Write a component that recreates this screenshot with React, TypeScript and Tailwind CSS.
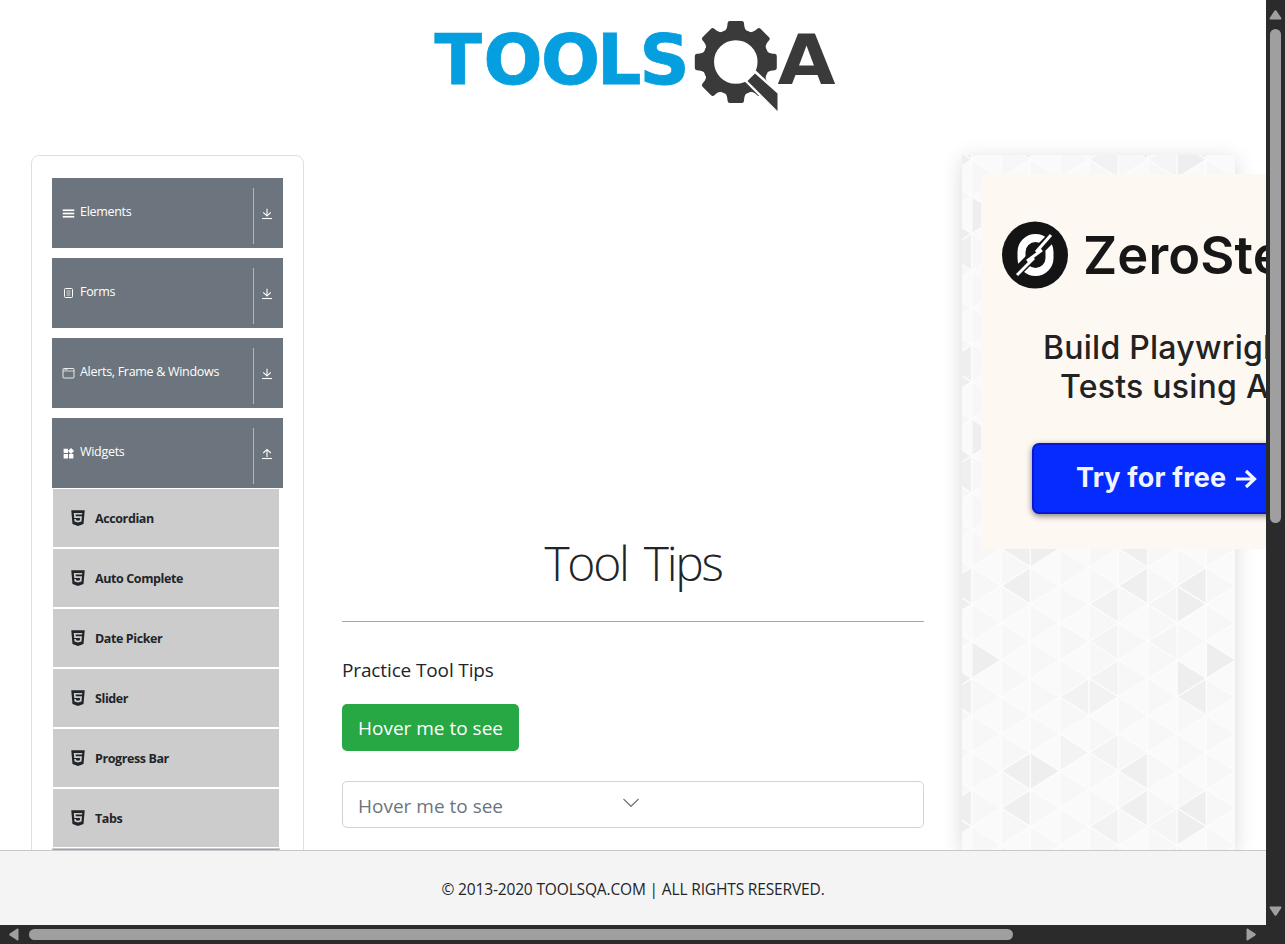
import React from "react";
import { MdWidgets } from "react-icons/md";
import { GiHamburgerMenu } from "react-icons/gi";
import { FaHtml5 } from "react-icons/fa";

const sections = [
  { label: "Elements", icon: "menu" },
  { label: "Forms", icon: "form" },
  { label: "Alerts, Frame & Windows", icon: "browser" },
  { label: "Widgets", icon: "widgets" },
];

const widgets = ["Accordian", "Auto Complete", "Date Picker", "Slider", "Progress Bar", "Tabs"];

function SectionIcon({ name }: { name: string }) {
  if (name === "menu") return <GiHamburgerMenu className="size-[13px] stroke-current stroke-[6]" />;
  if (name === "widgets") return <MdWidgets className="size-[13px]" />;
  if (name === "browser")
    return (
      <svg viewBox="0 0 13 13" className="size-[13px]" fill="none" stroke="currentColor" strokeOpacity="0.85">
        <rect x="1" y="1.500" width="11" height="9.500" rx="0.800" />
        <path d="M1 4h11M2.500 2.700h3" strokeWidth="0.800" />
      </svg>
    );
  return (
    <svg viewBox="0 0 13 13" className="size-[13px]" fill="none" stroke="currentColor">
      <rect x="2.500" y="1.500" width="8" height="9" rx="1" />
      <path d="M4.500 4h4M4.500 6h4M4.500 8h4" strokeWidth="0.700" />
    </svg>
  );
}

function ToggleArrow({ up }: { up: boolean }) {
  return (
    <svg viewBox="0 0 12 12" className="size-3" fill="none" stroke="currentColor" strokeWidth="1.100">
      <path d="M1 10.500h10" />
      {up ? <path d="M6 9V1.400M2.200 5 6 1.400 9.800 5" /> : <path d="M6 .8V8M2.200 4.400 6 8l3.800-3.600" />}
    </svg>
  );
}

function Logo() {
  const teeth = [0, 45, 90, 135, 180, 225, 270, 315];
  return (
    <svg viewBox="0 0 420 110" className="mt-[10px] ml-[425px] h-[110px] w-[420px]">
      <g fontFamily="DejaVu Sans" fontWeight="bold" fontSize="69.5">
        <text x="9.5 58.5 116 172 214.500" y="74" fill="#059fdf" stroke="#059fdf" strokeWidth="0.800">TOOLS</text>
        <text x="352.5" y="74" fill="#3a3a3a" textLength="58" lengthAdjust="spacingAndGlyphs">A</text>
      </g>
      <g fill="#3a3a3a">
        <g transform="translate(310.8 52)">
          <circle r="27.5" fill="none" stroke="#3a3a3a" strokeWidth="11.5" />
          {teeth.map((a) => (
            <path
              key={a}
              transform={`rotate(${a})`}
              d="M-14-29C-10-31-8.500-33-8.200-39Q-8-41-6-41H6Q8-41 8.200-39C8.500-33 10-31 14-29Z"
            />
          ))}
        </g>
        <path d="M330.500 63 353 84V102L321.500 70.500Z" stroke="#fff" strokeWidth="4" />
        <path d="M330 63.500 352.500 83.500V101L322.500 71Z" />
      </g>
    </svg>
  );
}

const COL = 29.33;
const ROW = 18.53;
const shades: Record<string, string> = {
  "0,5": "#eeeeee", "1,1": "#efefef", "1,11": "#efefef", "2,11": "#eeeeee",
  "3,7": "#f2f2f2", "3,10": "#f3f3f3", "3,4": "#f6f6f6", "4,2": "#f2f2f2",
  "4,7": "#f2f2f2", "4,6": "#f3f3f3", "4,10": "#f3f3f3", "4,4": "#f4f4f4",
  "5,1": "#efefef", "5,11": "#efefef", "6,2": "#f5f5f5", "6,4": "#f5f5f5",
  "7,1": "#eeeeee", "7,2": "#eeeeee", "7,6": "#eeeeee", "7,7": "#efefef",
};

function TrianglePattern() {
  const cells: React.ReactNode[] = [];
  for (let c = -1; c < 9; c++) {
    for (let r = -1; r < 40; r++) {
      const k = (((r - 22) % 12) + 12) % 12;
      const strip = (c + 8) % 8;
      const x = 9.8 + c * COL;
      const y = 412.3 + (r - 22) * ROW;
      const pointsRight = (k + strip + 1) % 2 === 0;
      const a = pointsRight ? x : x + COL;
      const b = pointsRight ? x + COL : x;
      const fill = shades[`${strip},${k}`] ?? (pointsRight ? "#f7f7f7" : "#fafafa");
      cells.push(
        <path key={`${c},${r}`} d={`M${a} ${y - ROW}V${y + ROW}L${b} ${y}Z`} fill={fill} stroke="#fcfcfc" strokeWidth="1.300" />
      );
    }
  }
  return <svg viewBox="0 0 273 695" className="h-[695px] w-[273px]">{cells}</svg>;
}

function Advert() {
  return (
    <div className="absolute top-[19px] left-[19px] h-[375px] w-[375px] overflow-hidden bg-[#fdf8f2] font-['Inter',sans-serif] text-[#222]">
      <div className="mt-[47px] ml-[21px] flex h-[68px] items-center">
        <svg viewBox="0 0 66 68" className="h-[68px] w-[66px] shrink-0">
          <ellipse cx="33" cy="34" rx="33" ry="33.500" fill="#141414" />
          <rect x="19.500" y="17" width="28" height="34" rx="14" fill="none" stroke="#fff" strokeWidth="8" />
          <path d="M12 54 54 12" stroke="#141414" strokeWidth="10" />
          <path d="M15 54 32 37M25 40 40 29M34 31 49 14" stroke="#fff" strokeWidth="3" fill="none" />
        </svg>
        <div className="ml-[15px] text-[52.500px] leading-[60px] font-semibold tracking-[0.100px] whitespace-nowrap text-[#171717]">ZeroStep</div>
      </div>
      <div className="mt-[39px] ml-[62px] text-[32px] leading-[39px] font-medium tracking-[0.250px] whitespace-nowrap">Build Playwright</div>
      <div className="ml-[79px] text-[32px] leading-[39px] font-medium tracking-[0.250px] whitespace-nowrap">Tests using AI</div>
      <div className="mt-[37px] ml-[51px] flex h-[71px] w-[276px] items-center rounded-[7px] border-2 border-[#0b17cf] bg-[#062bff] pl-[42px] text-[27px] font-bold text-[#f1f4ff] shadow-[0_2px_6px_rgba(0,0,0,0.5)]">
        <span className="tracking-[0.200px] whitespace-nowrap">Try for free</span>
        <svg viewBox="0 0 22 20" className="ml-[9px] h-5 w-[22px]" fill="none" stroke="currentColor" strokeWidth="3.200">
          <path d="M1 10h18M11 2l8.500 8-8.500 8" />
        </svg>
      </div>
    </div>
  );
}

export default function App() {
  return (
    <div className="grid h-[944px] w-[1285px] grid-cols-[1266px_19px] grid-rows-[925px_19px] overflow-hidden bg-[#2b2b2b] font-['Open_Sans','Noto_Sans',sans-serif] text-[#212529]">
      <div className="flex flex-col overflow-hidden bg-white">
        <header className="h-[155px] shrink-0">
          <Logo />
        </header>
        <main className="flex h-[695px] shrink-0 overflow-visible">
          <aside className="ml-[31px] h-[720px] w-[273px] shrink-0 rounded-lg border border-[#dfdfdf] px-5 pt-[22px]">
            <div className="flex flex-col gap-[10px]">
              {sections.map((s) => (
                <div key={s.label} className="flex h-[70px] w-[231px] bg-[#6c757d] text-white">
                  <div className="flex w-[201px] items-start pt-[25px] pl-[10px]">
                    <span className="mt-[4px] mr-[5px]"><SectionIcon name={s.icon} /></span>
                    <span className="text-[12.500px] leading-[18px] font-medium tracking-[-0.300px] whitespace-nowrap">{s.label}</span>
                  </div>
                  <div className="mt-[10px] flex h-14 w-[30px] items-center justify-center border-l border-[#b5b5b5] pr-[3px] pb-[4px]">
                    <ToggleArrow up={s.label === "Widgets"} />
                  </div>
                </div>
              ))}
            </div>
            <ul className="flex w-[228px] flex-col gap-[2px] pt-px pl-px">
              {widgets.map((w) => (
                <li key={w} className="flex h-[58px] w-[226px] items-center bg-[#ccc] pl-[16px] text-[12.500px] font-bold tracking-[-0.400px]">
                  <FaHtml5 className="mr-[8px] size-[18px]" />
                  <span className="pt-[2px]">{w}</span>
                </li>
              ))}
              <li className="-mt-px -ml-px h-10 w-[228px] border border-[#c9ccd3] bg-[#9fa2a8]" />
            </ul>
          </aside>
          <section className="ml-[38px] w-[582px] shrink-0">
            <h1 className="mt-[377px] h-[62px] text-center text-[48px] leading-[62px] font-light tracking-[-2.300px] [word-spacing:6px]">Tool Tips</h1>
            <hr className="mt-[27px] border-t border-[#a6a8aa]" />
            <p className="mt-[33px] h-[30px] text-[19px] leading-[30px] tracking-[-0.130px]">Practice Tool Tips</p>
            <button className="mt-[19px] flex h-[47px] w-[177px] items-center justify-center rounded-[5px] bg-[#28a745] pt-[2px] text-[19px] whitespace-nowrap text-white">Hover me to see</button>
            <div className="mt-[30px] flex h-[47px] items-center rounded-[5px] border border-[#ced4da] pt-[4px] pl-[15px] text-[19px] text-[#6c757d]">
              <span className="w-[265px]">Hover me to see</span>
              <svg viewBox="0 0 16 10" className="-mt-[8px] h-[10px] w-4" fill="none" stroke="#777" strokeWidth="1.200">
                <path d="M.5 1 8 8.300 15.500 1" />
              </svg>
            </div>
          </section>
          <aside className="relative ml-[38px] h-[695px] w-[273px] shrink-0 shadow-[0_4px_20px_rgba(0,0,0,0.150)]">
            <TrianglePattern />
            <Advert />
          </aside>
        </main>
        <footer className="relative flex h-[75px] shrink-0 items-center justify-center border-t border-[#c8c8c8] bg-[#f4f4f4] pt-[4px] text-[15.500px] tracking-[-0.150px] text-[#212529]">
          © 2013-2020 TOOLSQA.COM | ALL RIGHTS RESERVED.
        </footer>
      </div>
      <div className="flex flex-col items-center text-[#9f9f9f]">
        <svg viewBox="0 0 13 10" className="mt-[10px] h-[10px] w-[13px]" fill="currentColor"><path d="M5.500.8q1-1.200 2 0L12.300 8q.5 1.500-.8 1.500H1.500Q.2 9.500.7 8Z" /></svg>
        <div className="mt-[9px] h-[494px] w-[11px] rounded-full bg-[#9f9f9f]" />
        <svg viewBox="0 0 13 10" className="mt-auto mb-[9px] h-[10px] w-[13px]" fill="currentColor"><path d="M5.500 9.200q1 1.200 2 0L12.300 2Q12.800.5 11.500.5H1.500Q.2.5.7 2Z" /></svg>
      </div>
      <div className="flex items-center text-[#9f9f9f]">
        <svg viewBox="0 0 10 13" className="ml-[9px] h-[13px] w-[10px]" fill="currentColor"><path d="M.8 5.500q-1.200 1 0 2L8 12.300q1.500.5 1.500-.8V1.500Q9.500.2 8 .7Z" /></svg>
        <div className="ml-[10px] h-[11px] w-[984px] rounded-full bg-[#9f9f9f]" />
        <svg viewBox="0 0 10 13" className="mr-[10px] ml-auto h-[13px] w-[10px]" fill="currentColor"><path d="M9.200 5.500q1.200 1 0 2L2 12.300q-1.500.5-1.500-.8V1.500Q.5.2 2 .7Z" /></svg>
      </div>
      <div />
    </div>
  );
}
